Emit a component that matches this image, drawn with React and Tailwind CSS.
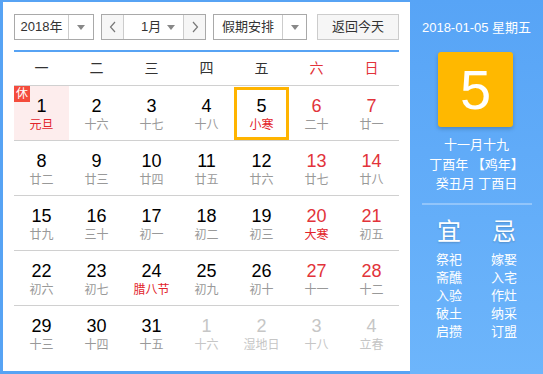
import React from 'react';

const FONT = { fontFamily: '"Liberation Sans", "Noto Sans CJK SC", sans-serif' };

const WEEK = ['一', '二', '三', '四', '五', '六', '日'];

// [day, lunar, kind] kind: '' normal, 'fest' red lunar, 'other' other month
const ROWS = [
  [[1, '元旦', 'fest'], [2, '十六'], [3, '十七'], [4, '十八'], [5, '小寒', 'fest'], [6, '二十'], [7, '廿一']],
  [[8, '廿二'], [9, '廿三'], [10, '廿四'], [11, '廿五'], [12, '廿六'], [13, '廿七'], [14, '廿八']],
  [[15, '廿九'], [16, '三十'], [17, '初一'], [18, '初二'], [19, '初三'], [20, '大寒', 'fest'], [21, '初五']],
  [[22, '初六'], [23, '初七'], [24, '腊八节', 'fest'], [25, '初九'], [26, '初十'], [27, '十一'], [28, '十二']],
  [[29, '十三'], [30, '十四'], [31, '十五'], [1, '十六', 'other'], [2, '湿地日', 'other'], [3, '十八', 'other'], [4, '立春', 'other']],
];

const YI = ['祭祀', '斋醮', '入验', '破土', '启攒'];
const JI = ['嫁娶', '入宅', '作灶', '纳采', '订盟'];

function Caret() {
  return <span className="block w-0 h-0 border-x-[4px] border-x-transparent border-t-[5px] border-t-[#888]" />;
}

function Chevron({ dir }) {
  return (
    <svg width="8" height="12" viewBox="0 0 8 12" fill="none" stroke="#777" strokeWidth="1.2">
      {dir === 'left' ? <path d="M6 1 L1.5 6 L6 11" /> : <path d="M2 1 L6.5 6 L2 11" />}
    </svg>
  );
}

function DayCell({ day, lunar, kind, col, rowIdx }) {
  const weekend = col >= 5;
  const other = kind === 'other';
  const numColor = other ? 'text-[#c6c6c6]' : weekend ? 'text-[#e2333a]' : 'text-black';
  const lunarColor = other ? 'text-[#c6c6c6]' : kind === 'fest' ? 'text-[#e2232a]' : 'text-[#999]';
  const isHoliday = rowIdx === 0 && col === 0;
  const isToday = rowIdx === 0 && col === 4;
  return (
    <div className={`relative flex flex-col items-center pt-[9px] ${isHoliday ? 'bg-[#fdeded]' : ''}`}>
      {isHoliday && (
        <span className="absolute left-0 top-0 w-[16px] h-[16px] bg-[#f44c3c] text-white text-[12px] leading-[16px] text-center">休</span>
      )}
      {isToday && <span className="absolute left-0 right-0 top-[1px] bottom-0 border-[3px] border-[#ffb400]" />}
      <span className={`text-[18px] leading-[22px] ${numColor}`}>{day}</span>
      <span className={`text-[12px] leading-[16px] ${lunarColor}`}>{lunar}</span>
    </div>
  );
}

export default function App() {
  return (
    <div className="flex w-[543px] h-[374px] bg-white" style={FONT}>
      <div className="w-[410px] h-full border-l-[3px] border-t-2 border-b-[3px] border-[#57a3f4] pl-[11px] pr-[11px] pt-[12px] flex flex-col">
        <div className="flex items-center h-[26px] text-[13px] text-[#333]">
          <div className="flex h-full w-[80px] border border-[#a9a9a9]">
            <div className="flex-1 flex items-center justify-center">2018年</div>
            <div className="w-[25px] border-l border-[#ccc] flex items-center justify-center"><Caret /></div>
          </div>
          <div className="flex h-full w-[105px] ml-[7px] border border-[#a9a9a9]">
            <div className="w-[22px] bg-[#f6f6f6] flex items-center justify-center border-r border-[#ccc]"><Chevron dir="left" /></div>
            <div className="flex-1 flex items-center justify-between pl-[17px] pr-[8px]">
              <span>1月</span>
              <Caret />
            </div>
            <div className="w-[22px] bg-[#f6f6f6] flex items-center justify-center border-l border-[#ccc]"><Chevron dir="right" /></div>
          </div>
          <div className="flex h-full w-[94px] ml-[7px] border border-[#a9a9a9]">
            <div className="flex-1 flex items-center justify-center">假期安排</div>
            <div className="w-[24px] border-l border-[#ccc] flex items-center justify-center"><Caret /></div>
          </div>
          <div className="h-full w-[82px] ml-[10px] border border-[#ccc] bg-[#f6f6f6] flex items-center justify-center">返回今天</div>
        </div>

        <div className="mt-[10px] h-[1.5px] bg-[#57a3f4]" />

        <div className="grid grid-cols-7 h-[34px] border-b border-[#d0d0d0] text-[14px] items-center text-center">
          {WEEK.map((w, i) => (
            <span key={w} className={i >= 5 ? 'text-[#e2333a]' : 'text-[#333]'}>{w}</span>
          ))}
        </div>

        {ROWS.map((row, r) => (
          <div key={r} className={`grid grid-cols-7 h-[55px] ${r < ROWS.length - 1 ? 'border-b border-[#d0d0d0]' : ''}`}>
            {row.map(([day, lunar, kind], c) => (
              <DayCell key={c} day={day} lunar={lunar} kind={kind} col={c} rowIdx={r} />
            ))}
          </div>
        ))}
      </div>

      <div className="w-[133px] h-full bg-gradient-to-b from-[#57a4f6] to-[#6db5fb] text-white flex flex-col items-center">
        <div className="mt-[19px] text-[13px] leading-[18px]">2018-01-05 星期五</div>
        <div className="mt-[15px] w-[75px] h-[75px] rounded-[3px] bg-[#ffb800] shadow-[0_2px_4px_rgba(0,0,0,0.2)] flex items-center justify-center text-[56px] leading-none font-light -translate-x-[1px]">5</div>
        <div className="mt-[8px] text-[13px] leading-[19.5px] text-center">
          <div>十一月十九</div>
          <div>丁酉年 【鸡年】</div>
          <div>癸丑月 丁酉日</div>
        </div>
        <div className="mt-[9px] w-[110px] h-[2px] bg-white/30" />
        <div className="grid grid-cols-2 w-[110px] mt-[12px] text-center">
          <div className="flex flex-col items-center">
            <span className="text-[24px] leading-[30px] [text-shadow:0_1px_2px_rgba(0,0,0,0.2)]">宜</span>
            <div className="mt-[4px] text-[13px] leading-[18px]">
              {YI.map((t) => <div key={t}>{t}</div>)}
            </div>
          </div>
          <div className="flex flex-col items-center">
            <span className="text-[24px] leading-[30px] [text-shadow:0_1px_2px_rgba(0,0,0,0.2)]">忌</span>
            <div className="mt-[4px] text-[13px] leading-[18px]">
              {JI.map((t) => <div key={t}>{t}</div>)}
            </div>
          </div>
        </div>
      </div>
    </div>
  );
}
